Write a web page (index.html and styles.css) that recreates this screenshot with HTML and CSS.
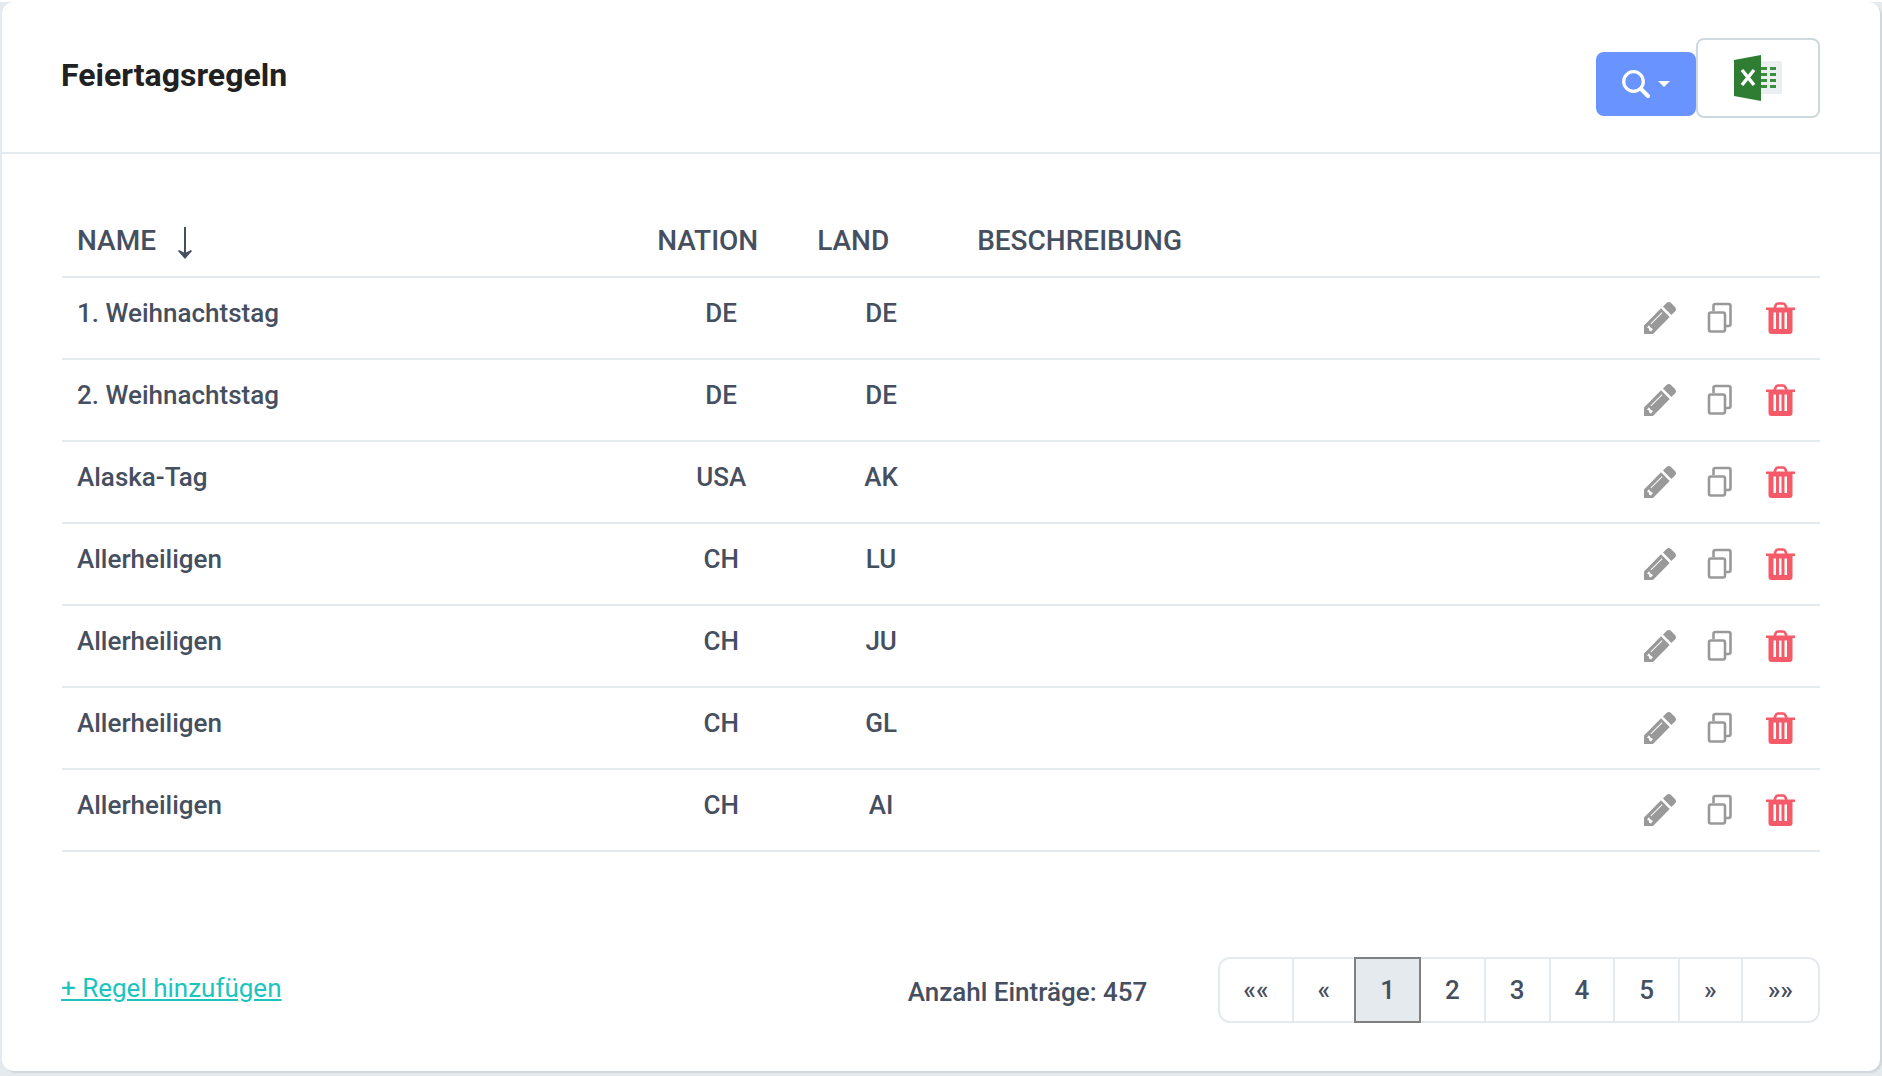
FILE: index.html
```html
<!DOCTYPE html>
<html lang="de">
  <head>
    <meta charset="UTF-8" />
    <meta name="viewport" content="width=device-width, initial-scale=1.0" />
    <title>Feiertagsregeln</title>
    <link rel="stylesheet" href="styles.css">
  </head>
  <body>
    <svg class="sprite" aria-hidden="true">
      <symbol id="icon-edit" viewBox="0 0 32 32">
        <path fill="#999" fill-rule="evenodd" d="M0 32V23.500L17 6.300L25.700 15L9 32ZM3 25.500L5 23.300L6.500 25.500L9 27L7 29.500L5 28.500V26.800ZM6.500 21.500L7.200 22.200L18.500 11L17.800 10.200Z" />
        <path fill="#999" d="M19 4.500L22.500 1Q25 -1 27.500 1.500L31 5Q33 7.500 31 9.500L27.300 12.900Z" />
      </symbol>
      <symbol id="icon-copy" viewBox="0 0 32 32">
        <path fill="none" stroke="#999" stroke-width="2.600" d="M9.500 9V4Q9.500 2 11.500 2H24.500Q26.500 2 26.500 4V22Q26.500 24 24.500 24H22M7 10.500H19Q21 10.500 21 12.500V27.500Q21 29.500 19 29.500H7Q5 29.500 5 27.500V12.500Q5 10.500 7 10.500Z" />
      </symbol>
      <symbol id="icon-delete" viewBox="0 0 32 32">
        <path fill="none" stroke="#f55a68" stroke-width="2.600" d="M10.500 6L12 2.500Q12.500 1.500 14 1.500H19Q20.500 1.500 21 2.500L22.500 6" />
        <path fill="#f55a68" fill-rule="evenodd" d="M2 5.500H31V8H28.500V29Q28.500 32 25.500 32H7.500Q4.500 32 4.500 29V8H2ZM9.500 10.500V27H12V10.500ZM15 10.500V27H17.500V10.500ZM20.500 10.500V27H23V10.500Z" />
      </symbol>
    </svg>

    <main class="card">
      <header class="card-header">
        <h1>Feiertagsregeln</h1>
        <div class="tools">
          <button type="button" class="btn btn-search" aria-label="Suche">
            <svg width="28" height="28" viewBox="0 0 28 28"><circle cx="11.500" cy="11.500" r="9.800" fill="none" stroke="#fff" stroke-width="3.200" /><path d="M19 19L26 26" stroke="#fff" stroke-width="4" stroke-linecap="round" /></svg>
            <span class="caret"></span>
          </button>
          <button type="button" class="btn btn-excel" aria-label="Excel-Export">
            <svg width="48" height="46" viewBox="0 0 48 46">
              <path fill="#eceff1" d="M27 6H47Q48 6 48 7V38Q48 39 47 39H27Z" />
              <path fill="#388e3c" d="M27 12H33V15H27ZM27 18H33V21H27ZM27 24H33V27H27ZM27 30H33V33H27ZM36 12H42V15H36ZM36 18H42V21H36ZM36 24H42V27H36ZM36 30H42V33H36Z" />
              <path fill="#2e7d32" d="M0 5L27 0V46L0 41Z" />
              <path fill="none" stroke="#fff" stroke-width="3.500" d="M8 15L20 30M20 15L8 30" />
            </svg>
          </button>
        </div>
      </header>

      <div class="card-body">
        <table class="rules">
          <thead>
            <tr>
              <th class="col-name" scope="col">NAME <svg width="14" height="32" viewBox="0 0 14 32"><path d="M7 0V28" stroke="#464f60" stroke-width="2" /><path d="M0 24L1 23L7 26L13 23L14 24L7 32Z" fill="#464f60" /></svg></th>
              <th class="col-code" scope="col">NATION</th>
              <th class="col-code" scope="col">LAND</th>
              <th scope="col">BESCHREIBUNG</th>
              <th class="col-actions"></th>
            </tr>
          </thead>
          <tbody id="rows"></tbody>
        </table>
      </div>

      <footer class="card-footer">
        <a class="add" href="#">+ Regel hinzufügen</a>
        <span class="count">Anzahl Einträge: 457</span>
        <nav class="pages">
          <a href="#">««</a>
          <a href="#">«</a>
          <a href="#" class="active">1</a>
          <a href="#">2</a>
          <a href="#">3</a>
          <a href="#">4</a>
          <a href="#">5</a>
          <a href="#">»</a>
          <a href="#">»»</a>
        </nav>
      </footer>
    </main>
    <script src="script.js"></script>
  </body>
</html>
```
FILE: styles.css
```css
* {
  box-sizing: border-box;
}

html {
  background-color: #e4eaee;
}

body {
  margin: 0;
  padding: 0 2px 2px;
  border-top: 2px solid #fff;
  color: #464f60;
  font-family: Roboto, sans-serif;
  font-size: 26px;
  font-weight: 500;
  line-height: 40px;
}

.sprite {
  display: none;
}

.card {
  background-color: #fff;
  border-radius: 12px;
  box-shadow: 2px 2px 0 #cfd8dc;
}

.card-header {
  display: flex;
  justify-content: space-between;
  padding: 36px 60px 34px 59px;
  border-bottom: 2px solid #e4eaee;
}

h1 {
  margin: 17px 0 0;
  color: #212121;
  font-size: 32px;
  font-weight: 700;
  line-height: 40px;
}

.tools {
  display: flex;
  align-items: flex-end;
}

.btn {
  display: flex;
  align-items: center;
  justify-content: center;
  border-radius: 8px;
  cursor: pointer;
}

.btn-search {
  width: 100px;
  height: 64px;
  margin-bottom: 2px;
  gap: 8px;
  border: none;
  background-color: #6993ff;
}

.btn-excel {
  width: 124px;
  height: 80px;
  border: 2px solid #cfd8dc;
  background-color: #fff;
}

.caret {
  border: 6px solid transparent;
  border-top-color: #fff;
  border-bottom: none;
}

.card-body {
  padding: 52px 60px 0;
}

.rules {
  width: 100%;
  table-layout: fixed;
  border-collapse: collapse;
}

.rules th {
  height: 71px;
  padding: 0 15px;
  font-size: 28px;
  font-weight: 500;
  text-align: left;
}

.rules th svg {
  margin-left: 15px;
  vertical-align: middle;
}

.rules td {
  height: 82px;
  padding: 15px;
  vertical-align: top;
}

.rules tr {
  border-bottom: 2px solid #e4eaee;
}

.col-name {
  width: 33%;
}

.col-code {
  width: 160px;
}

.col-actions {
  width: 200px;
}

.rules .code {
  padding-right: 17px;
  text-align: center;
}

.actions {
  display: flex;
  justify-content: flex-end;
  gap: 28px;
  padding: 9px;
}

.actions button {
  width: 32px;
  height: 32px;
  padding: 0;
  border: none;
  background: none;
  cursor: pointer;
}

.actions svg {
  display: block;
  width: 32px;
  height: 32px;
}

.card-footer {
  display: flex;
  align-items: center;
  padding: 105px 60px 48px 59px;
}

.add {
  margin-right: auto;
  margin-bottom: 4px;
  color: #1bc5bd;
  font-weight: 400;
}

.count {
  margin-top: 4px;
  margin-right: 71px;
}

.pages {
  display: flex;
  border: 2px solid #e4eaee;
  border-radius: 12px;
}

.pages a {
  margin: -2px 0;
  padding: 13px 24px;
  color: #464f60;
  text-decoration: none;
}

.pages a:first-child {
  padding: 13px 23px;
}

.pages a:last-child {
  padding: 13px 25px;
}

.pages a + a {
  border-left: 2px solid #e4eaee;
}

.pages a.active {
  margin-right: -2px;
  padding: 11px 24px;
  border: 2px solid #808080;
  background-color: #e4eaee;
  z-index: 1;
}
```
FILE: script.js
```js
const rules = [
  ["1. Weihnachtstag", "DE", "DE"],
  ["2. Weihnachtstag", "DE", "DE"],
  ["Alaska-Tag", "USA", "AK"],
  ["Allerheiligen", "CH", "LU"],
  ["Allerheiligen", "CH", "JU"],
  ["Allerheiligen", "CH", "GL"],
  ["Allerheiligen", "CH", "AI"],
];

function button(icon, label) {
  return `<button type="button" aria-label="${label}"><svg><use href="#icon-${icon}"></use></svg></button>`;
}

document.getElementById("rows").innerHTML = rules
  .map(
    ([name, nation, land]) => `<tr>
      <td>${name}</td>
      <td class="code">${nation}</td>
      <td class="code">${land}</td>
      <td></td>
      <td><div class="actions">${button("edit", "Bearbeiten")}${button("copy", "Kopieren")}${button("delete", "Löschen")}</div></td>
    </tr>`
  )
  .join("");
```
